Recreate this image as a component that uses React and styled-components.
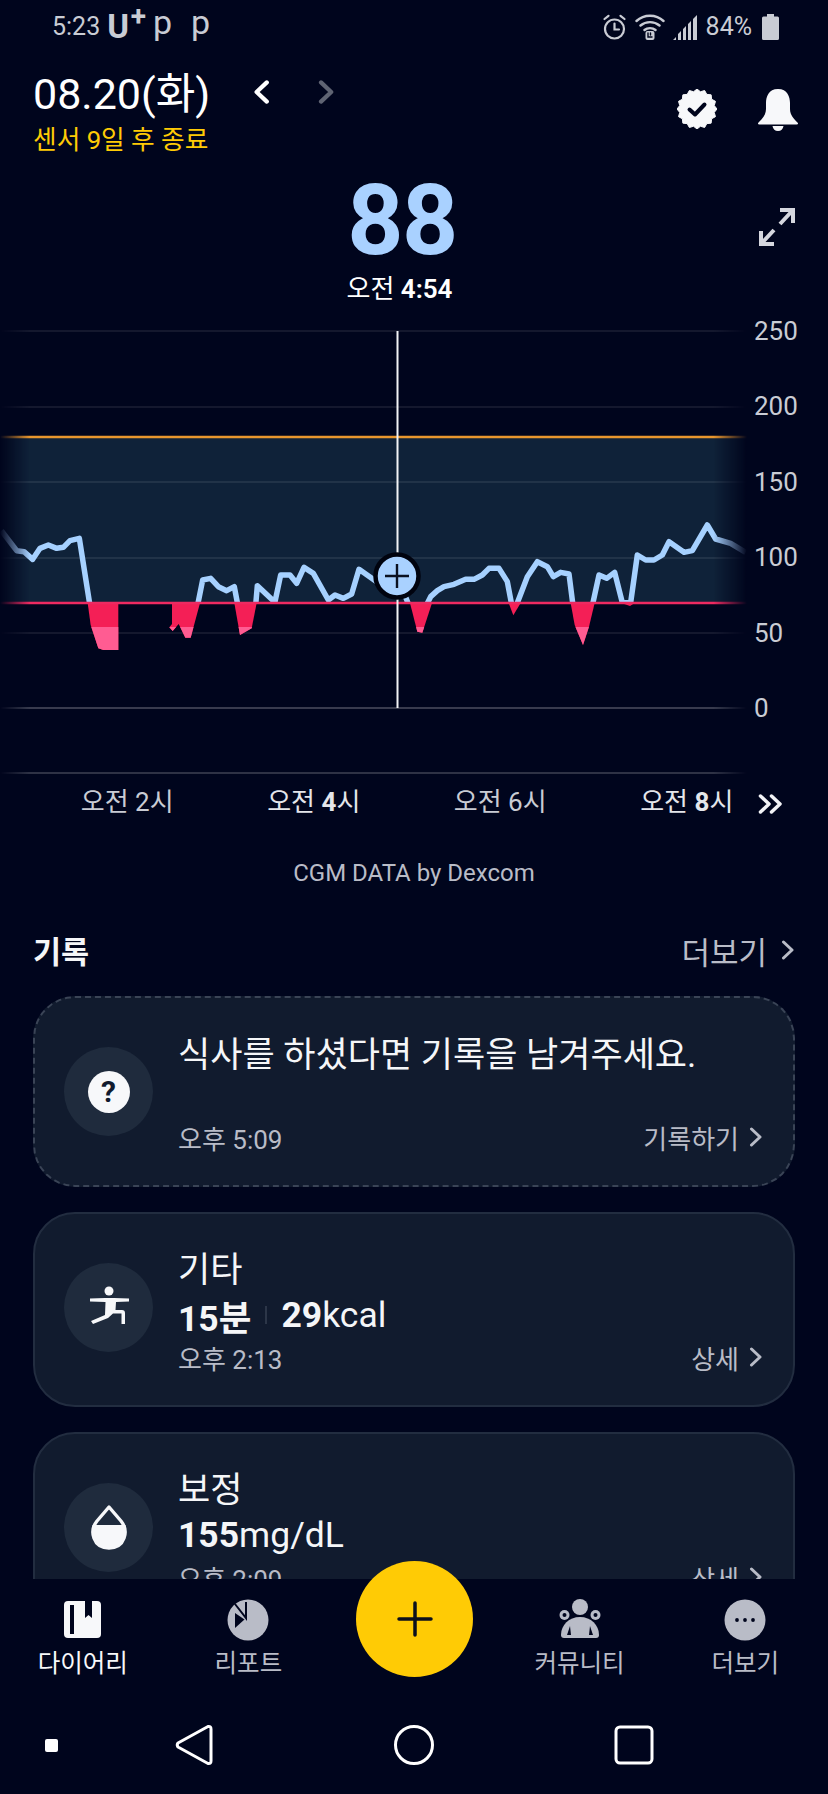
import React from 'react'
import styled, { createGlobalStyle } from 'styled-components'

const GlobalStyle = createGlobalStyle`
  html, body {
    margin: 0;
    padding: 0;
    background: #00051d;
  }
  * {
    box-sizing: border-box;
  }
`

const FONT = `Roboto, "Noto Sans CJK KR", sans-serif`

const Screen = styled.div`
  width: 828px;
  height: 1794px;
  display: flex;
  flex-direction: column;
  overflow: hidden;
  background: #00051d;
  color: #fff;
  font-family: ${FONT};
`

/* status bar */
const StatusBar = styled.div`
  height: 50px;
  flex: none;
  display: flex;
  justify-content: space-between;
  align-items: center;
  padding: 3px 49px 0 52px;
  color: #c9ccd4;
  font-size: 25px;
`
const StatusLeft = styled.div`
  display: flex;
  align-items: center;
`
const Carrier = styled.span`
  position: relative;
  margin-left: 7px;
  padding-right: 16px;
  font-size: 33px;
  font-weight: 700;
  line-height: 32px;
`
const CarrierPlus = styled.span`
  position: absolute;
  top: -8px;
  right: -1px;
  font-size: 28px;
  line-height: 28px;
`
const NoticeDot = styled.span`
  margin-left: ${p => p.$gap}px;
  font-size: 34px;
  line-height: 26px;
  position: relative;
  top: -5px;
`
const StatusRight = styled.div`
  display: flex;
  align-items: center;
  gap: 8px;
`
const Percent = styled.span`
  margin-right: 2px;
`

/* header */
const Header = styled.div`
  height: 115px;
  flex: none;
  display: flex;
  justify-content: space-between;
  padding: 20px 33px 0;
`
const DateLine = styled.div`
  display: flex;
  align-items: center;
  height: 48px;
`
const DateText = styled.div`
  font-size: 43px;
  line-height: 48px;
  width: 220px;
  color: #fff;
`
const NavArrows = styled.div`
  display: flex;
  align-items: center;
  gap: 48px;
  margin-top: -4px;
`
const Sensor = styled.div`
  margin-top: 4px;
  font-size: 25.7px;
  line-height: 36px;
  color: #ffcb05;
`
const HeaderActions = styled.div`
  display: flex;
  gap: 40px;
  padding-top: 19px;
  margin-right: -4px;
`

/* current reading */
const Reading = styled.div`
  position: relative;
  height: 151px;
  flex: none;
  display: flex;
  flex-direction: column;
  align-items: center;
  padding-right: 24px;
`
const Value = styled.div`
  font-size: 98px;
  font-weight: 700;
  line-height: 100px;
  letter-spacing: -1.5px;
  color: #a9d1ff;
  margin-top: 6px;
`
const ReadingTime = styled.div`
  font-size: 26px;
  line-height: 36px;
  margin-right: 5px;
  color: #fff;
  b {
    font-weight: 600;
  }
`
const ExpandButton = styled.div`
  position: absolute;
  right: 33px;
  top: 43px;
  display: flex;
`

/* chart */
const ChartRow = styled.div`
  height: 459px;
  flex: none;
  display: flex;
`
const AxisLabels = styled.div`
  height: 407px;
  margin-left: 7px;
  display: flex;
  flex-direction: column;
  justify-content: space-between;
  color: #c9ccd4;
  font-size: 26px;
  line-height: 30px;
`
const TimeRow = styled.div`
  height: 54px;
  flex: none;
  display: flex;
  align-items: center;
  padding-left: 34px;
`
const TimeLabel = styled.div`
  width: 186.5px;
  text-align: center;
  font-size: 26px;
  line-height: 30px;
  color: ${p => (p.$strong ? '#e4e6eb' : '#c9ccd4')};
  b {
    font-weight: 700;
  }
`
const MoreTimes = styled.div`
  display: flex;
  margin-left: -22px;
  padding-top: 3px;
  svg + svg {
    margin-left: -3px;
  }
`
const Credit = styled.div`
  height: 88px;
  flex: none;
  display: flex;
  align-items: center;
  justify-content: center;
  font-size: 24px;
  color: #b9bcc7;
`

/* records */
const Feed = styled.div`
  flex: 1;
  min-height: 0;
  overflow: hidden;
`
const SectionHead = styled.div`
  height: 66px;
  margin-bottom: 13px;
  padding: 0 33px;
  display: flex;
  align-items: center;
  justify-content: space-between;
`
const SectionTitle = styled.div`
  font-size: 30.5px;
  font-weight: 700;
  color: #f5f6f8;
`
const MoreLink = styled.div`
  display: flex;
  align-items: center;
  gap: 14px;
  font-size: 31px;
  color: #b9bcc7;
`
const Card = styled.div`
  margin: 0 33px 25px;
  height: ${p => (p.$dashed ? 191 : 195)}px;
  padding: 0 30px 0 29px;
  display: flex;
  background: #111b2e;
  border: 2px ${p => (p.$dashed ? 'dashed #3a4456' : 'solid #222d40')};
  border-radius: 42px;
`
const IconCircle = styled.div`
  width: 89px;
  height: 89px;
  flex: none;
  align-self: center;
  margin-top: ${p => (p.$dashed ? 0 : -5)}px;
  margin-right: 25px;
  border-radius: 50%;
  background: #1f2b3d;
  display: flex;
  align-items: center;
  justify-content: center;
`
const QuestionMark = styled.div`
  width: 42px;
  height: 42px;
  border-radius: 50%;
  background: #f7f8fa;
  color: #111b2e;
  font-size: 30px;
  font-weight: 700;
  line-height: 42px;
  text-align: center;
`
const CardBody = styled.div`
  flex: 1;
  padding-top: ${p => (p.$dashed ? 35 : 36)}px;
`
const CardTitle = styled.div`
  font-size: 35px;
  line-height: ${p => (p.$prompt ? 46 : 41)}px;
  color: #f5f6f8;
  margin-bottom: ${p => (p.$prompt ? 40 : 0)}px;
`
const CardValue = styled.div`
  display: flex;
  align-items: center;
  height: 48px;
  font-size: 35.5px;
  color: #f5f6f8;
  b {
    font-weight: 700;
  }
`
const Divider = styled.span`
  width: 2px;
  height: 18px;
  margin: 0 14px;
  background: #2c3648;
`
const CardFoot = styled.div`
  display: flex;
  justify-content: space-between;
  align-items: center;
  height: 36px;
  font-size: 26px;
  color: #b9bcc7;
`
const CardLink = styled.div`
  display: flex;
  align-items: center;
  gap: 10px;
`

/* bottom tabs */
const TabBar = styled.div`
  position: relative;
  height: 121px;
  flex: none;
  display: grid;
  grid-template-columns: repeat(5, 1fr);
  padding-top: 20px;
  background: #00051d;
`
const Tab = styled.div`
  display: flex;
  flex-direction: column;
  align-items: center;
  color: ${p => (p.$active ? '#f7f8fa' : '#b9bcc7')};
  font-size: 24.5px;
`
const TabIcon = styled.div`
  height: 42px;
  display: flex;
  align-items: center;
`
const TabLabel = styled.div`
  line-height: 44px;
  margin-top: 1px;
`
const AddButton = styled.div`
  position: absolute;
  left: 356px;
  top: -18px;
  width: 117px;
  height: 116px;
  border-radius: 50%;
  background: #ffcb05;
  display: flex;
  align-items: center;
  justify-content: center;
`
const SoftKeys = styled.div`
  height: 94px;
  flex: none;
  padding-bottom: 4px;
  display: grid;
  grid-template-columns: 102px 184px 256px 184px;
  align-items: center;
  justify-items: center;
`
const RecentDot = styled.div`
  width: 13px;
  height: 13px;
  border-radius: 2px;
  background: #fff;
`

const Chevron = ({ size = 20, color = '#b9bcc7', width = 3, left = false }) => (
  <svg width={size * 0.7} height={size} viewBox="0 0 14 20" fill="none" stroke={color} strokeWidth={width} strokeLinecap="round" strokeLinejoin="round">
    <path d={left ? 'M11.5 2 L3 10 L11.5 18' : 'M2.5 2 L11 10 L2.5 18'} />
  </svg>
)

const AlarmIcon = () => (
  <svg width="25" height="26" viewBox="0 0 24 26" fill="none" stroke="#c9ccd4" strokeWidth="2.2" strokeLinecap="round">
    <circle cx="12" cy="15" r="9.5" />
    <path d="M12 9.5 V15.5 H16.5 M2 5 L6 1.8 M22 5 L18 1.8" />
  </svg>
)

const WifiIcon = () => (
  <svg width="30" height="28" viewBox="0 0 30 28" fill="none" stroke="#c9ccd4" strokeWidth="2.4" strokeLinecap="round">
    <path d="M1.5 8 C9 1 21 1 28.5 8 M5.5 12.5 C11 8 19 8 24.5 12.5 M9.5 17 C12.5 14.5 17.5 14.5 20.5 17" />
    <rect x="10.5" y="18" width="9" height="9" rx="2" fill="#c9ccd4" stroke="none" />
    <path d="M13 20 V24 H17 M15.5 20 V22" stroke="#00051d" strokeWidth="1.4" />
  </svg>
)

const SignalIcon = () => (
  <svg width="25" height="26" viewBox="0 0 25 26" fill="#c9ccd4">
    <path d="M0 26 L3 23 V26 Z M5 26 V20 L8 17 V26 Z M10 26 V15 L13 12 V26 Z M15 26 V10 L18 7 V26 Z M20 26 V5 L24 1 V26 Z" />
  </svg>
)

const BatteryIcon = () => (
  <svg width="17" height="26" viewBox="0 0 17 26" fill="#c9ccd4">
    <path d="M5 0 H12 V2.5 H15.5 Q17 2.5 17 4 V24.5 Q17 26 15.5 26 H1.5 Q0 26 0 24.5 V4 Q0 2.5 1.5 2.5 H5 Z" />
  </svg>
)

// scalloped verified badge, 16 bumps
const badgeOutline = Array.from({ length: 32 }, (_, i) => {
  const r = i % 2 ? 17.6 : 20
  const a = (i * Math.PI) / 16
  return `${(20 + r * Math.sin(a)).toFixed(2)},${(20 - r * Math.cos(a)).toFixed(2)}`
}).join(' ')

const BadgeIcon = () => (
  <svg width="40" height="40" viewBox="0 0 40 40">
    <polygon points={badgeOutline} fill="#f7f8fa" stroke="#f7f8fa" strokeWidth="1" strokeLinejoin="round" />
    <path d="M12.5 20.5 L18 25.5 L27.5 15.5" fill="none" stroke="#00051d" strokeWidth="4" strokeLinecap="round" strokeLinejoin="round" />
  </svg>
)

const BellIcon = () => (
  <svg width="42" height="42" viewBox="0 0 42 42" fill="#f7f8fa">
    <path d="M21 0 C11.5 0 9 8 9 14 V20 C9 26 5 30 1.5 33.5 Q0 35.5 2.5 35.5 H39.5 Q42 35.5 40.5 33.5 C37 30 33 26 33 20 V14 C33 8 30.5 0 21 0 Z" />
    <path d="M15.5 37 H26.5 C26 40 24 42 21 42 C18 42 16 40 15.5 37 Z" />
  </svg>
)

const ExpandIcon = () => (
  <svg width="36" height="38" viewBox="0 0 36 38" fill="none" stroke="#d5d7de" strokeWidth="4">
    <path d="M21 2 H34 V15 M34 2 L21 16 M2 23 V36 H15 M2 36 L15 22" />
  </svg>
)

const RunnerIcon = () => (
  <svg width="44" height="44" viewBox="0 0 44 44" fill="#f7f8fa" stroke="none">
    <circle cx="22" cy="6" r="4.5" />
    <path d="M3 13.5 L18 13 H27 L42 13.500 V16.500 L29 17 L28.500 25 H35 Q38 25 38 28 V39 H34.500 V28.500 H26 L21 33 L6 39 L4 36 L18 30 L18.500 17 L3 16.500 Z" />
  </svg>
)

const DropIcon = () => (
  <svg width="40" height="46" viewBox="0 0 40 46">
    <path d="M20 3 L32 17 C40 27 36 44 20 44 C4 44 0 27 8 17 Z" fill="none" stroke="#f7f8fa" strokeWidth="3.4" strokeLinejoin="round" />
    <path d="M3.5 21 H36.5 C39 32 33 44 20 44 C7 44 1 32 3.5 21 Z" fill="#f7f8fa" />
  </svg>
)

const DiaryIcon = () => (
  <svg width="38" height="38" viewBox="0 0 38 38">
    <rect width="37" height="37" rx="4" fill="#f7f8fa" />
    <path d="M6 4 H10 V33 H6 Z M21 0 H28 V17 L24.500 14 L21 17 Z" fill="#00051d" />
  </svg>
)

const ReportIcon = () => (
  <svg width="42" height="42" viewBox="0 0 42 42">
    <circle cx="21" cy="21" r="20.500" fill="#b9bcc7" />
    <path d="M19 3 V19 L8 5" fill="none" stroke="#00051d" strokeWidth="2" />
    <path d="M8 14 L17.500 20.500 L8 29 Z" fill="#00051d" />
  </svg>
)

const CommunityIcon = () => (
  <svg width="42" height="42" viewBox="0 0 42 42" fill="#b9bcc7">
    <circle cx="21" cy="8" r="8" />
    <circle cx="5.500" cy="16" r="5" />
    <circle cx="36.500" cy="16" r="5" />
    <circle cx="5.500" cy="16" r="2" fill="#00051d" />
    <circle cx="36.500" cy="16" r="2" fill="#00051d" />
    <path d="M21 18 C32 18 40 26 40 36 Q40 39 37 39 H5 Q2 39 2 36 C2 26 10 18 21 18 Z" />
    <path d="M11 27 L8 36 H12 Z M31 27 L34 36 H30 Z" fill="#00051d" />
  </svg>
)

const DotsIcon = () => (
  <svg width="42" height="42" viewBox="0 0 42 42">
    <circle cx="21" cy="21" r="20.500" fill="#b9bcc7" />
    <circle cx="13" cy="21" r="1.900" fill="#00051d" />
    <circle cx="21" cy="21" r="1.900" fill="#00051d" />
    <circle cx="29" cy="21" r="1.900" fill="#00051d" />
  </svg>
)

// glucose trace, read off the reference at 3x. Second half is offset by the crop
const px = pts => pts.map(([x, y]) => `${x / 3},${y / 3}`).join(' ')
const shift = pts => pts.map(([x, y]) => [x + 1242, y])

const traceStart = [[4, 632], [50, 692], [72, 695], [98, 718], [120, 685], [145, 675], [170, 685], [190, 682], [210, 662], [238, 655], [272, 870]]
const traceEnd = [
  [590, 870], [608, 780], [632, 775], [655, 800], [680, 812], [703, 800], [718, 880], [765, 880], [772, 797], [820, 842], [824, 850],
  [842, 765], [870, 765], [890, 790], [912, 742], [940, 760], [985, 840], [1005, 825], [1030, 835], [1055, 822], [1077, 748], [1130, 785],
  [1192, 767], [1232, 870],
  ...shift([
    [30, 870], [50, 830], [70, 812], [90, 800], [120, 793], [155, 778], [180, 778], [205, 765], [225, 745], [255, 745], [280, 785], [298, 880],
    [340, 770], [370, 725], [400, 740], [418, 770], [440, 757], [465, 762], [480, 880], [530, 880], [555, 765], [578, 775], [602, 757], [625, 848],
    [650, 848], [670, 705], [695, 720], [720, 720], [745, 705], [765, 665], [810, 697], [835, 692], [880, 615], [905, 657], [950, 670], [995, 697],
  ]),
]

const lows = [
  [[263, 849], [272, 915], [295, 985], [310, 990], [355, 990], [355, 849]],
  [[516, 849], [516, 912], [508, 922], [518, 933], [536, 912], [556, 953], [572, 953], [600, 849]],
  [[703, 849], [720, 945], [755, 925], [770, 849]],
  shift([[-12, 849], [10, 935], [25, 938], [54, 849]]),
  shift([[284, 849], [298, 886], [320, 849]]),
  shift([[470, 849], [482, 915], [507, 975], [525, 920], [542, 849]]),
  shift([[622, 849], [648, 858], [662, 849]]),
]

const GRID = [11, 87, 162, 238, 313]

const GlucoseChart = () => (
  <svg width="747" height="459" viewBox="0 -4 747 459">
    <defs>
      <linearGradient id="edgeFade" gradientUnits="userSpaceOnUse" x1="0" x2="747" y1="0" y2="0">
        <stop offset="0" stopColor="#fff" stopOpacity="0" />
        <stop offset="0.04" stopColor="#fff" />
        <stop offset="0.955" stopColor="#fff" />
        <stop offset="1" stopColor="#fff" stopOpacity="0" />
      </linearGradient>
      <mask id="edgeMask" maskUnits="userSpaceOnUse" x="0" y="-4" width="747" height="459">
        <rect x="0" y="-4" width="747" height="459" fill="url(#edgeFade)" />
      </mask>
      <clipPath id="aboveLow">
        <rect x="0" y="-4" width="747" height="287" />
      </clipPath>
      <clipPath id="veryLow">
        <rect x="0" y="307" width="747" height="60" />
      </clipPath>
    </defs>
    <g mask="url(#edgeMask)">
      <rect x="0" y="117" width="747" height="166" fill="#0f2239" />
      {GRID.map(y => (
        <line key={y} x1="0" x2="747" y1={y} y2={y} stroke="#fff" strokeOpacity="0.08" strokeWidth="2" />
      ))}
      <line x1="0" x2="747" y1="388" y2="388" stroke="#fff" strokeOpacity="0.22" strokeWidth="2" />
      <line x1="0" x2="747" y1="453" y2="453" stroke="#fff" strokeOpacity="0.18" strokeWidth="2" />
      <g clipPath="url(#aboveLow)" fill="none" stroke="#a6d1ff" strokeWidth="5.500" strokeLinejoin="round">
        <polyline points={px(traceStart)} />
        <polyline points={px(traceEnd)} />
      </g>
      {lows.map((pts, i) => (
        <polygon key={i} points={px(pts)} fill="#f41f56" />
      ))}
      <g clipPath="url(#veryLow)">
        {lows.map((pts, i) => (
          <polygon key={i} points={px(pts)} fill="#ff5c92" />
        ))}
      </g>
      <line x1="0" x2="747" y1="117" y2="117" stroke="#e8962e" strokeWidth="2.500" />
      <line x1="0" x2="747" y1="283" y2="283" stroke="#ee2a61" strokeWidth="2.500" />
    </g>
    <line x1="397.500" x2="397.500" y1="11" y2="388" stroke="#f2f3f6" strokeWidth="2" />
    <circle cx="397" cy="256" r="21.500" fill="#a9d1ff" stroke="#00030f" strokeWidth="4.500" />
    <path d="M385 256 H409 M397 244 V268" stroke="#0a1020" strokeWidth="2.400" />
  </svg>
)

const App = () => {
  return (
    <Screen>
      <GlobalStyle />
      <StatusBar>
        <StatusLeft>
          <span>5:23</span>
          <Carrier>U<CarrierPlus>+</CarrierPlus></Carrier>
          <NoticeDot $gap={8}>p</NoticeDot>
          <NoticeDot $gap={19}>p</NoticeDot>
        </StatusLeft>
        <StatusRight>
          <AlarmIcon />
          <WifiIcon />
          <SignalIcon />
          <Percent>84%</Percent>
          <BatteryIcon />
        </StatusRight>
      </StatusBar>

      <Header>
        <div>
          <DateLine>
            <DateText>08.20(화)</DateText>
            <NavArrows>
              <Chevron left size={24} color="#fff" width={3.500} />
              <Chevron size={24} color="#5f6473" width={3.500} />
            </NavArrows>
          </DateLine>
          <Sensor>센서 9일 후 종료</Sensor>
        </div>
        <HeaderActions>
          <BadgeIcon />
          <BellIcon />
        </HeaderActions>
      </Header>

      <Reading>
        <Value>88</Value>
        <ReadingTime>오전 <b>4:54</b></ReadingTime>
        <ExpandButton><ExpandIcon /></ExpandButton>
      </Reading>

      <ChartRow>
        <GlucoseChart />
        <AxisLabels>
          {[250, 200, 150, 100, 50, 0].map(n => <span key={n}>{n}</span>)}
        </AxisLabels>
      </ChartRow>

      <TimeRow>
        <TimeLabel>오전 2시</TimeLabel>
        <TimeLabel $strong>오전 <b>4</b>시</TimeLabel>
        <TimeLabel>오전 6시</TimeLabel>
        <TimeLabel $strong>오전 <b>8</b>시</TimeLabel>
        <MoreTimes>
          <Chevron size={20} color="#f2f3f6" width={3.500} />
          <Chevron size={20} color="#f2f3f6" width={3.500} />
        </MoreTimes>
      </TimeRow>

      <Credit>CGM DATA by Dexcom</Credit>

      <Feed>
        <SectionHead>
          <SectionTitle>기록</SectionTitle>
          <MoreLink>더보기 <Chevron size={20} /></MoreLink>
        </SectionHead>

        <Card $dashed>
          <IconCircle $dashed><QuestionMark>?</QuestionMark></IconCircle>
          <CardBody $dashed>
            <CardTitle $prompt>식사를 하셨다면 기록을 남겨주세요.</CardTitle>
            <CardFoot>
              <span>오후 5:09</span>
              <CardLink>기록하기 <Chevron size={20} /></CardLink>
            </CardFoot>
          </CardBody>
        </Card>

        <Card>
          <IconCircle><RunnerIcon /></IconCircle>
          <CardBody>
            <CardTitle>기타</CardTitle>
            <CardValue><b>15분</b><Divider /><b>29</b>kcal</CardValue>
            <CardFoot>
              <span>오후 2:13</span>
              <CardLink>상세 <Chevron size={20} /></CardLink>
            </CardFoot>
          </CardBody>
        </Card>

        <Card>
          <IconCircle><DropIcon /></IconCircle>
          <CardBody>
            <CardTitle>보정</CardTitle>
            <CardValue><b>155</b>mg/dL</CardValue>
            <CardFoot>
              <span>오후 2:09</span>
              <CardLink>상세 <Chevron size={20} /></CardLink>
            </CardFoot>
          </CardBody>
        </Card>
      </Feed>

      <TabBar>
        <Tab $active><TabIcon><DiaryIcon /></TabIcon><TabLabel>다이어리</TabLabel></Tab>
        <Tab><TabIcon><ReportIcon /></TabIcon><TabLabel>리포트</TabLabel></Tab>
        <div />
        <Tab><TabIcon><CommunityIcon /></TabIcon><TabLabel>커뮤니티</TabLabel></Tab>
        <Tab><TabIcon><DotsIcon /></TabIcon><TabLabel>더보기</TabLabel></Tab>
        <AddButton>
          <svg width="36" height="36" viewBox="0 0 36 36" stroke="#0b0f1c" strokeWidth="3.500" strokeLinecap="round">
            <path d="M2 18 H34 M18 2 V34" />
          </svg>
        </AddButton>
      </TabBar>

      <SoftKeys>
        <RecentDot />
        <svg width="38" height="42" viewBox="0 0 38 42" fill="none" stroke="#fff" strokeWidth="3" strokeLinejoin="round">
          <path d="M33 2.500 Q36 2 36 5 V37 Q36 40 33 39.500 L3 23 Q1.500 21 3 19 Z" />
        </svg>
        <svg width="42" height="42" viewBox="0 0 42 42" fill="none" stroke="#fff" strokeWidth="3">
          <circle cx="21" cy="21" r="18.500" />
        </svg>
        <svg width="40" height="40" viewBox="0 0 40 40" fill="none" stroke="#fff" strokeWidth="3">
          <rect x="2" y="2" width="36" height="36" rx="4" />
        </svg>
      </SoftKeys>
    </Screen>
  )
}

export default App
